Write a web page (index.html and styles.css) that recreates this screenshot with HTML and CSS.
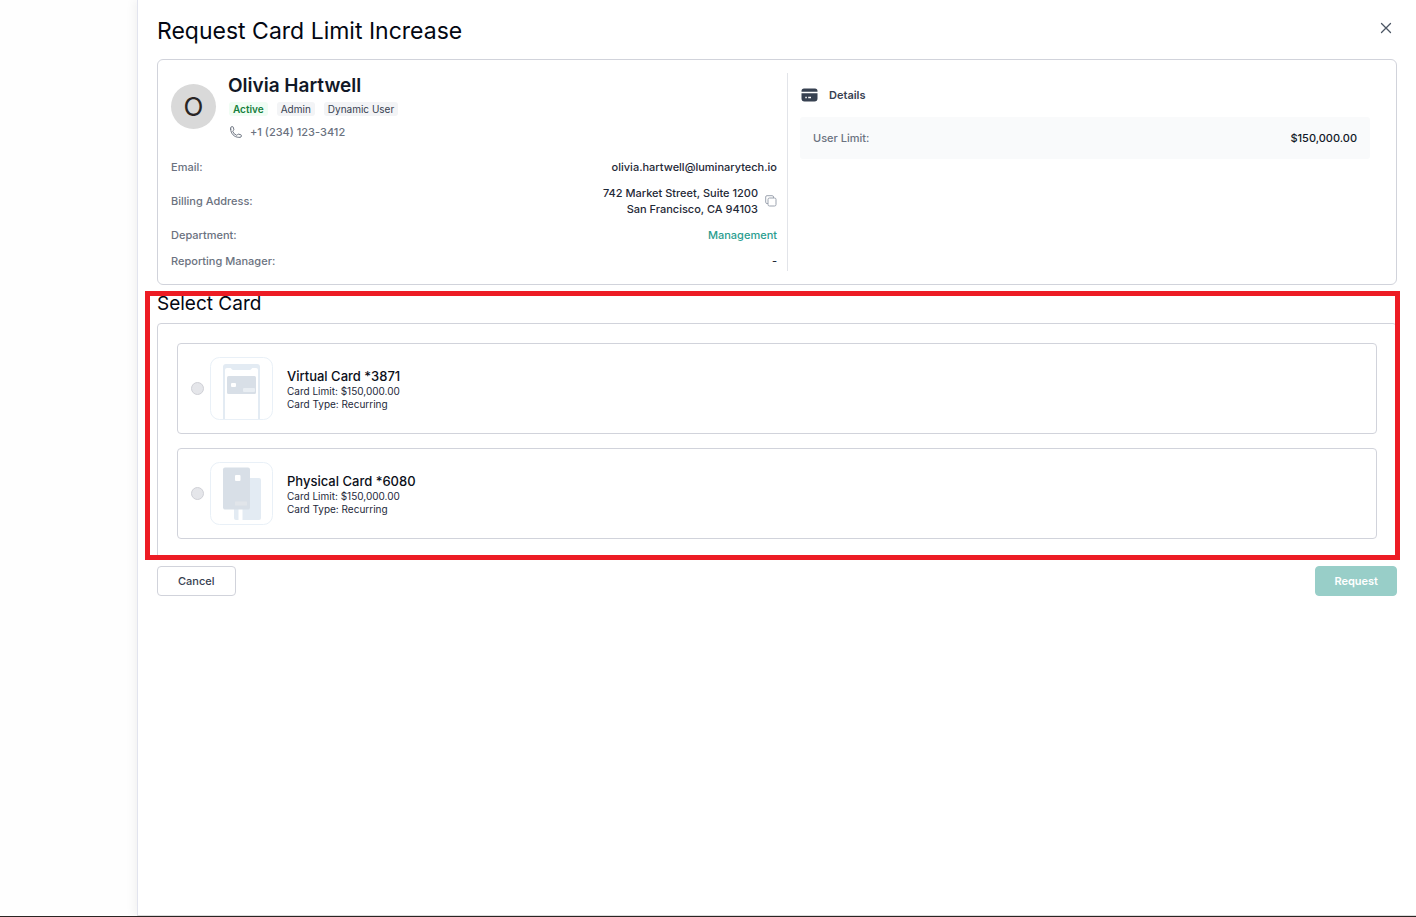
FILE: index.html
```html
<!DOCTYPE html>
<html lang="en">
<head>
<meta charset="utf-8">
<meta name="viewport" content="width=device-width, initial-scale=1">
<title>Request Card Limit Increase</title>
<link rel="stylesheet" href="styles.css">
</head>
<body>
<main class="drawer">
  <header class="drawer-header">
    <h1 class="drawer-title">Request Card Limit Increase</h1>
    <button class="close" type="button" aria-label="Close">
      <svg width="12" height="12" viewBox="0 0 12 12" fill="none" stroke="currentColor" stroke-width="1.3" stroke-linecap="round"><path d="M1.5 1.5l9 9M10.5 1.5l-9 9"/></svg>
    </button>
  </header>

  <section class="profile">
    <div class="profile-main">
      <div class="person">
        <div class="avatar">O</div>
        <div class="person-info">
          <h2 class="person-name">Olivia Hartwell</h2>
          <div class="badges">
            <span class="badge badge-active">Active</span>
            <span class="badge">Admin</span>
            <span class="badge">Dynamic User</span>
          </div>
          <div class="phone">
            <svg width="12" height="12" viewBox="1 1 22 22" fill="none" stroke="currentColor" stroke-width="1.8" stroke-linecap="round" stroke-linejoin="round"><path d="M2.25 6.75c0 8.284 6.716 15 15 15h2.25a2.25 2.25 0 0 0 2.25-2.25v-1.372c0-.516-.351-.966-.852-1.091l-4.423-1.106c-.44-.11-.902.055-1.173.417l-.97 1.293c-.282.376-.769.542-1.21.38a12.035 12.035 0 0 1-7.143-7.143c-.162-.441.004-.928.38-1.21l1.293-.97c.363-.271.527-.734.417-1.173L6.963 3.102a1.125 1.125 0 0 0-1.091-.852H4.500A2.250 2.250 0 0 0 2.250 4.500v2.250z"/></svg>
            <span>+1 (234) 123-3412</span>
          </div>
        </div>
      </div>
      <dl class="facts">
        <div class="fact"><dt>Email:</dt><dd>olivia.hartwell@luminarytech.io</dd></div>
        <div class="fact">
          <dt>Billing Address:</dt>
          <dd class="address">
            <span>742 Market Street, Suite 1200<br>San Francisco, CA 94103</span>
            <button class="copy" type="button" aria-label="Copy address">
              <svg width="12" height="12" viewBox="0 0 12 12" fill="none" stroke="currentColor"><rect x="3" y="3" width="8" height="8" rx="1.5"/><path d="M3 8.500H2A1.300 1.300 0 0 1 .7 7.200V2A1.300 1.300 0 0 1 2 .7h5.200A1.300 1.300 0 0 1 8.500 2v1"/></svg>
            </button>
          </dd>
        </div>
        <div class="fact"><dt>Department:</dt><dd><a class="link" href="#department">Management</a></dd></div>
        <div class="fact"><dt>Reporting Manager:</dt><dd>-</dd></div>
      </dl>
    </div>
    <div class="details">
      <h3 class="details-title">
        <svg width="17" height="14" viewBox="0 0 17 14"><path fill="#374151" d="M3 .5h11A2.500 2.500 0 0 1 16.500 3v.7H.5V3A2.500 2.500 0 0 1 3 .5zM.5 5.200h16V10.500A3 3 0 0 1 13.500 13.500h-10A3 3 0 0 1 .5 10.500z"/><path stroke="#fff" stroke-width="1.400" d="M4.300 9.500h1.500M7.200 9.500h2.800"/></svg>
        <span>Details</span>
      </h3>
      <div class="limit"><span>User Limit:</span><span class="limit-value">$150,000.00</span></div>
    </div>
  </section>

  <section class="select-card">
    <h2 class="select-title">Select Card</h2>
    <div class="card-list">
      <label class="option">
        <input class="radio" type="radio" name="card" value="3871" disabled>
        <svg class="thumb" width="63" height="63" viewBox="0 0 63 63" fill="none">
          <rect x=".5" y=".5" width="62" height="62" rx="9" fill="#fff" stroke="#e9f0f7"/>
          <path fill="#e3ebf3" d="M13 62V10a3 3 0 0 1 3-3h31a3 3 0 0 1 3 3v52h-2V13a2 2 0 0 0-2-2h-3.500c-.8 0-1 2-3 2H23.500c-2 0-2.200-2-3-2H17a2 2 0 0 0-2 2v49z"/>
          <rect x="17" y="19" width="29" height="18" rx="1.500" fill="#d8dfe7"/>
          <rect x="21" y="26" width="5" height="4" rx="1" fill="#fff"/>
          <rect x="33" y="31" width="12" height="4" rx="1" fill="#e9eef3"/>
        </svg>
        <span class="option-text">
          <span class="option-name">Virtual Card *3871</span>
          <span class="option-line">Card Limit: $150,000.00</span>
          <span class="option-line">Card Type: Recurring</span>
        </span>
      </label>
      <label class="option">
        <input class="radio" type="radio" name="card" value="6080" disabled>
        <svg class="thumb" width="63" height="63" viewBox="0 0 63 63" fill="none">
          <rect x=".5" y=".5" width="62" height="62" rx="9" fill="#fff" stroke="#e9f0f7"/>
          <rect x="24" y="16" width="27" height="42" rx="2" fill="#e3ebf3"/>
          <rect x="28.500" y="47" width="4" height="11" fill="#fff"/>
          <rect x="13" y="5.500" width="27" height="42" rx="2" fill="#d8dfe7"/>
          <rect x="25" y="13" width="5.500" height="6" rx="1" fill="#fff"/>
          <rect x="25" y="39.500" width="12" height="4" rx=".5" fill="#e1e5ea"/>
        </svg>
        <span class="option-text">
          <span class="option-name">Physical Card *6080</span>
          <span class="option-line">Card Limit: $150,000.00</span>
          <span class="option-line">Card Type: Recurring</span>
        </span>
      </label>
    </div>
    <div class="highlight"></div>
  </section>

  <footer class="actions">
    <button class="btn btn-cancel" type="button">Cancel</button>
    <button class="btn btn-request" type="button">Request</button>
  </footer>
</main>
</body>
</html>
```
FILE: styles.css
```css
*, *::before, *::after { box-sizing: border-box; }

body {
  margin: 0;
  min-height: 100vh;
  display: flex;
  background: #fefefe;
  border-bottom: 1px solid #2b2422;
  font-family: Inter, "Liberation Sans", sans-serif;
  font-size: 11px;
  line-height: 16px;
  color: #1f2937;
}

h1, h2, h3, dl, dd { margin: 0; }
button { font: inherit; cursor: pointer; }

.drawer {
  flex: 1;
  margin-left: 137px;
  padding: 15px 19px 20px;
  background: #fff;
  border-left: 1px solid #e2e4ee;
  border-bottom: 1px solid #dcdcdc;
  box-shadow: -2px 0 10px rgba(0, 0, 0, 0.06);
}

.drawer-header {
  display: flex;
  justify-content: space-between;
  align-items: flex-start;
  margin-bottom: 12px;
}

.drawer-title {
  font-size: 23px;
  line-height: 32px;
  font-weight: 400;
  color: #030712;
}

.close {
  display: flex;
  margin: 3px 1px 0 0;
  padding: 4px;
  border: 0;
  background: none;
  color: #4b5563;
}

.profile {
  display: grid;
  grid-template-columns: 617fr 595fr;
  padding: 13px;
  border: 1px solid #d1d3db;
  border-radius: 6px;
  font-weight: 500;
}

.profile-main {
  padding: 0 10px 2px 0;
  border-right: 1px solid #e2e4e9;
}

.person {
  display: flex;
  align-items: center;
  gap: 12px;
  margin-bottom: 19px;
}

.avatar {
  width: 45px;
  height: 45px;
  border-radius: 50%;
  background: #d9d9d9;
  color: #292524;
  font-size: 26px;
  line-height: 45px;
  font-weight: 400;
  text-align: center;
}

.person-name {
  font-size: 19px;
  line-height: 26px;
  font-weight: 600;
  color: #111827;
}

.badges {
  display: flex;
  gap: 9px;
  margin: 3px 0 8px 1px;
}

.badge {
  padding: 0 4px;
  border-radius: 3px;
  background: #f3f4f6;
  color: #374151;
  font-size: 10px;
  line-height: 14px;
  font-weight: 400;
}

.badge-active {
  background: #f0fdf4;
  color: #15803d;
  font-weight: 600;
}

.phone {
  display: flex;
  align-items: center;
  gap: 8px;
  margin-left: 2px;
  color: #6b7280;
}

.facts { display: grid; gap: 10px; }

.fact {
  display: flex;
  justify-content: space-between;
  align-items: center;
}

.fact dt { color: #6b7280; }

.address {
  display: flex;
  align-items: center;
  gap: 7px;
  text-align: right;
}

.copy {
  display: flex;
  padding: 0;
  border: 0;
  background: none;
  color: #9ca3af;
}

.link { color: #2a9d8f; text-decoration: none; }

.details { padding: 14px 13px 0 12px; }

.details-title {
  display: flex;
  align-items: center;
  gap: 11px;
  margin: 0 0 14px 1px;
  font-size: 11px;
  font-weight: 600;
  color: #374151;
}

.limit {
  display: flex;
  justify-content: space-between;
  padding: 13px;
  border-radius: 3px;
  background: #f9fafb;
  color: #6b7280;
}

.limit-value { color: #111827; }

.select-card { position: relative; margin-top: 6px; }

.select-title {
  margin-bottom: 6px;
  font-size: 19px;
  line-height: 26px;
  font-weight: 400;
  color: #030712;
}

.card-list {
  display: grid;
  gap: 14px;
  padding: 19px;
  border: 1px solid #d1d3db;
  border-radius: 4px;
}

.option {
  display: flex;
  align-items: center;
  padding: 13px;
  border: 1px solid #d1d3db;
  border-radius: 4px;
}

.radio {
  appearance: none;
  width: 13px;
  height: 13px;
  margin: 0 6px 0 0;
  border: 1px solid #cfd0d6;
  border-radius: 50%;
  background: #e5e6ea;
}

.thumb { margin-right: 14px; }

.option-text { display: grid; color: #1e293b; }

.option-name {
  font-size: 13px;
  line-height: 18px;
  font-weight: 500;
  color: #0b0f19;
}

.option-line { font-size: 10px; line-height: 13px; }

.highlight {
  position: absolute;
  inset: 0 -3px -1px -12px;
  border: 5px solid #ed1c24;
  pointer-events: none;
}

.actions {
  display: flex;
  justify-content: space-between;
  margin-top: 7px;
}

.btn {
  padding: 6px 20px;
  border: 1px solid #d1d3db;
  border-radius: 4px;
  background: #fff;
  color: #374151;
  font-weight: 500;
}

.btn-request {
  padding: 6px 18px;
  border-color: #98cec8;
  background: #98cec8;
  color: #fff;
  font-weight: 600;
}
```
